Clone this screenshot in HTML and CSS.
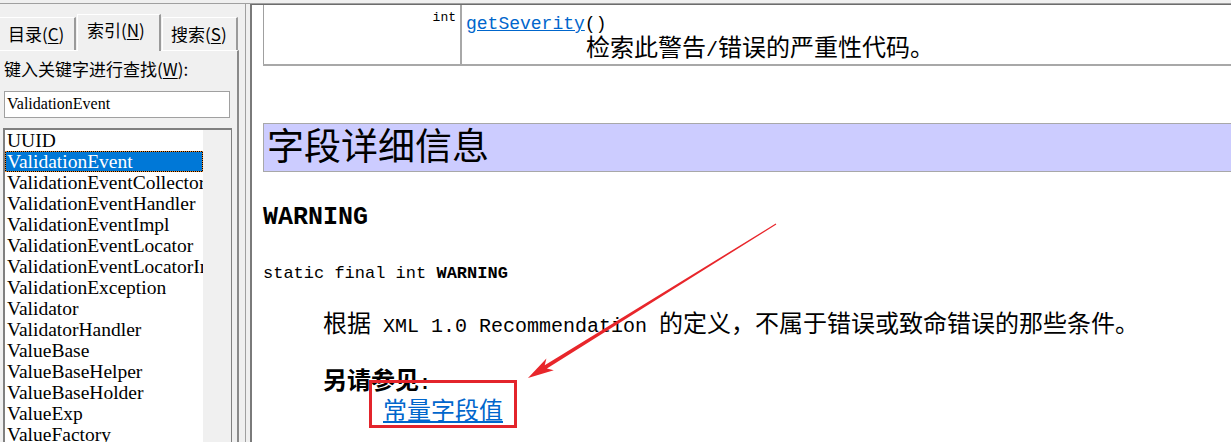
FILE: index.html
```html
<!DOCTYPE html>
<html lang="zh-CN">
<head>
<meta charset="utf-8">
<title>ValidationEvent</title>
<link rel="stylesheet" href="styles.css">
</head>
<body>
<div class="app">
  <aside class="nav">
    <div class="tabs">
      <div class="tab">目录(<u>C</u>)</div>
      <div class="tab active">索引(<u>N</u>)</div>
      <div class="tab">搜索(<u>S</u>)</div>
    </div>
    <div class="panel">
      <div class="label">键入关键字进行查找(<u>W</u>):</div>
      <div class="input">ValidationEvent</div>
      <div class="listbox">
        <ul class="list">
          <li>UUID</li>
          <li class="sel">ValidationEvent</li>
          <li>ValidationEventCollector</li>
          <li>ValidationEventHandler</li>
          <li>ValidationEventImpl</li>
          <li>ValidationEventLocator</li>
          <li>ValidationEventLocatorImpl</li>
          <li>ValidationException</li>
          <li>Validator</li>
          <li>ValidatorHandler</li>
          <li>ValueBase</li>
          <li>ValueBaseHelper</li>
          <li>ValueBaseHolder</li>
          <li>ValueExp</li>
          <li>ValueFactory</li>
        </ul>
        <div class="track"></div>
      </div>
    </div>
  </aside>
  <div class="splitter"><div class="split-line"></div></div>
  <main class="content">
    <table class="summary">
      <tr>
        <td class="type">int</td>
        <td class="method">
          <div class="sig"><a href="#">getSeverity</a>()</div>
          <div class="desc">检索此警告<span class="en">/</span>错误的严重性代码。</div>
        </td>
      </tr>
    </table>
    <h2 class="section">字段详细信息</h2>
    <h3 class="field-name">WARNING</h3>
    <pre class="decl">static final int <b>WARNING</b></pre>
    <div class="field-body">
      <p class="para">根据<span class="en"> XML 1.0 Recommendation </span>的定义，不属于错误或致命错误的那些条件。</p>
      <p class="see">另请参见<span class="en">:</span></p>
      <p class="see-link"><a href="#">常量字段值</a></p>
    </div>
  </main>
  <svg class="annot" width="1231" height="442" viewBox="0 0 1231 442">
    <polygon fill="#e8262b" points="776.3,224.4 546.9,368.6 553.8,370.2 528,378 546.4,358.4 544.7,365.2 775.7,223.6"/>
    <rect x="370.5" y="381.5" width="145" height="45" fill="none" stroke="#e3242b" stroke-width="3"/>
  </svg>
</div>
</body>
</html>
```

FILE: styles.css
```css
html, body {
  margin: 0;
  padding: 0;
  background: #f0f0f0;
  overflow: hidden;
}

.app {
  position: relative;
  display: flex;
  height: 438px;
  margin-top: 3px;
  border-top: 1px solid #a0a0a0;
  overflow: hidden;
}

/* ---------- left navigation ---------- */
.nav {
  width: 240px;
  flex: none;
  display: flex;
  flex-direction: column;
  font-family: "Noto Sans CJK SC", sans-serif;
  font-size: 17px;
  color: #000;
}

.tabs {
  display: flex;
  align-items: flex-end;
  height: 46px;
  box-sizing: border-box;
  padding-top: 10px;
}

.tab {
  box-sizing: border-box;
  height: 33px;
  width: 76px;
  margin-right: 1px;
  padding-left: 8px;
  line-height: 31px;
  background: #f0f0f0;
  border-top: 1px solid #ffffff;
  border-left: 1px solid #ffffff;
  border-right: 2px solid #9a9a9a;
  white-space: nowrap;
}

.tab:first-child {
  border-left: none;
}

.tab.active {
  width: 84px;
  padding-left: 9px;
  line-height: 30px;
  position: relative;
  z-index: 1;
  margin-bottom: -1px;
  height: 37px;
}

.tab u {
  text-decoration: underline;
  text-underline-offset: 2px;
}

.panel {
  flex: 1;
  width: 239px;
  box-sizing: border-box;
  border-top: 1px solid #ffffff;
  border-right: 2px solid #8a8a8a;
  padding: 6px 0 0 0;
}

.label {
  padding-left: 4px;
  height: 27px;
  line-height: 24px;
  white-space: nowrap;
}

.label u {
  text-underline-offset: 2px;
}

.input {
  box-sizing: border-box;
  margin: 7px 0 0 4px;
  width: 226px;
  height: 27px;
  background: #fff;
  border: 1px solid #a0a0a0;
  font-family: "Liberation Serif", serif;
  font-size: 16px;
  line-height: 24px;
  padding-left: 2px;
  color: #000;
}

.listbox {
  display: flex;
  box-sizing: border-box;
  margin: 10px 0 0 3px;
  width: 229px;
  height: 330px;
  border-top: 2px solid #808080;
  border-left: 2px solid #808080;
  border-right: 1px solid #808080;
  background: #fff;
}

.list {
  list-style: none;
  margin: 0;
  padding: 0;
  width: 198px;
  flex: none;
  overflow: hidden;
  font-family: "Liberation Serif", serif;
  font-size: 19.5px;
  line-height: 21px;
  color: #000;
}

.list li {
  height: 21px;
  padding-left: 2px;
  white-space: nowrap;
  box-sizing: border-box;
}

.list li.sel {
  color: #fff;
  background: #000;
  border: 1px dotted #ee8a2a;
  box-shadow: inset 0 0 0 40px #0078d7;
  padding-left: 1px;
  line-height: 19px;
}

.track {
  flex: 1;
  background: #f0f0f0;
}

/* ---------- splitter ---------- */
.splitter {
  width: 10px;
  flex: none;
  display: flex;
  justify-content: center;
}

.split-line {
  width: 1px;
  background: #a0a0a0;
  margin-left: 1px;
}

/* ---------- content ---------- */
.content {
  flex: 1;
  min-width: 0;
  background: #fff;
  border-left: 2px solid #7a7a7a;
  border-top: 1px solid #6d6d6d;
  padding-left: 11px;
  overflow: hidden;
  color: #000;
  font-family: "Noto Sans CJK SC", sans-serif;
}

.content a {
  color: #0066cc;
  text-decoration: underline;
}

.en {
  font-family: "Liberation Mono", monospace;
  font-size: 20px;
}

.summary {
  width: 1000px;
  border-collapse: collapse;
  border-left: 1px solid #a0a0a0;
  border-bottom: 2px solid #a8a8a8;
}

.summary tr {
  height: 60px;
}

.summary td {
  vertical-align: top;
  padding: 0;
}

.summary .type {
  width: 192px;
  text-align: right;
  padding: 5px 4px 0 0;
  font-family: "Liberation Mono", monospace;
  font-size: 13px;
  line-height: 15px;
  border-right: 2px solid #a8a8a8;
}

.summary .method {
  padding: 9px 0 0 4px;
}

.sig {
  font-family: "Liberation Mono", monospace;
  font-size: 18px;
  line-height: 20px;
}

.desc {
  margin: 0 0 0 120px;
  font-size: 24px;
  line-height: 24px;
}

.desc .en {
  line-height: 24px;
}

.section {
  box-sizing: border-box;
  width: 1000px;
  margin: 57px 0 0 0;
  height: 49px;
  background: #ccccff;
  border: 1px solid #a8a8a8;
  border-right: none;
  padding: 2px 0 0 3px;
  font-size: 37px;
  line-height: 37px;
  font-weight: normal;
}

.field-name {
  margin: 31px 0 0 0;
  font-family: "Liberation Mono", monospace;
  font-weight: bold;
  font-size: 25px;
  line-height: 30px;
}

.decl {
  margin: 31px 0 0 0;
  font-family: "Liberation Mono", monospace;
  font-size: 17px;
  line-height: 20px;
}

.decl b {
  font-weight: bold;
}

.field-body {
  padding-left: 60px;
}

.para {
  margin: 26px 0 0 0;
  font-size: 24px;
  line-height: 24px;
  white-space: nowrap;
}

.para .en {
  line-height: 24px;
}

.see {
  margin: 28px 0 0 0;
  font-size: 24px;
  line-height: 24px;
  font-weight: bold;
}

.see .en {
  font-weight: bold;
  line-height: 24px;
}

.see-link {
  margin: 1px 0 0 60px;
  font-size: 24px;
  line-height: 24px;
}

.see-link a {
  text-underline-offset: 2px;
}

/* ---------- annotation overlay ---------- */
.annot {
  position: absolute;
  left: 0;
  top: -4px;
  pointer-events: none;
}
```
